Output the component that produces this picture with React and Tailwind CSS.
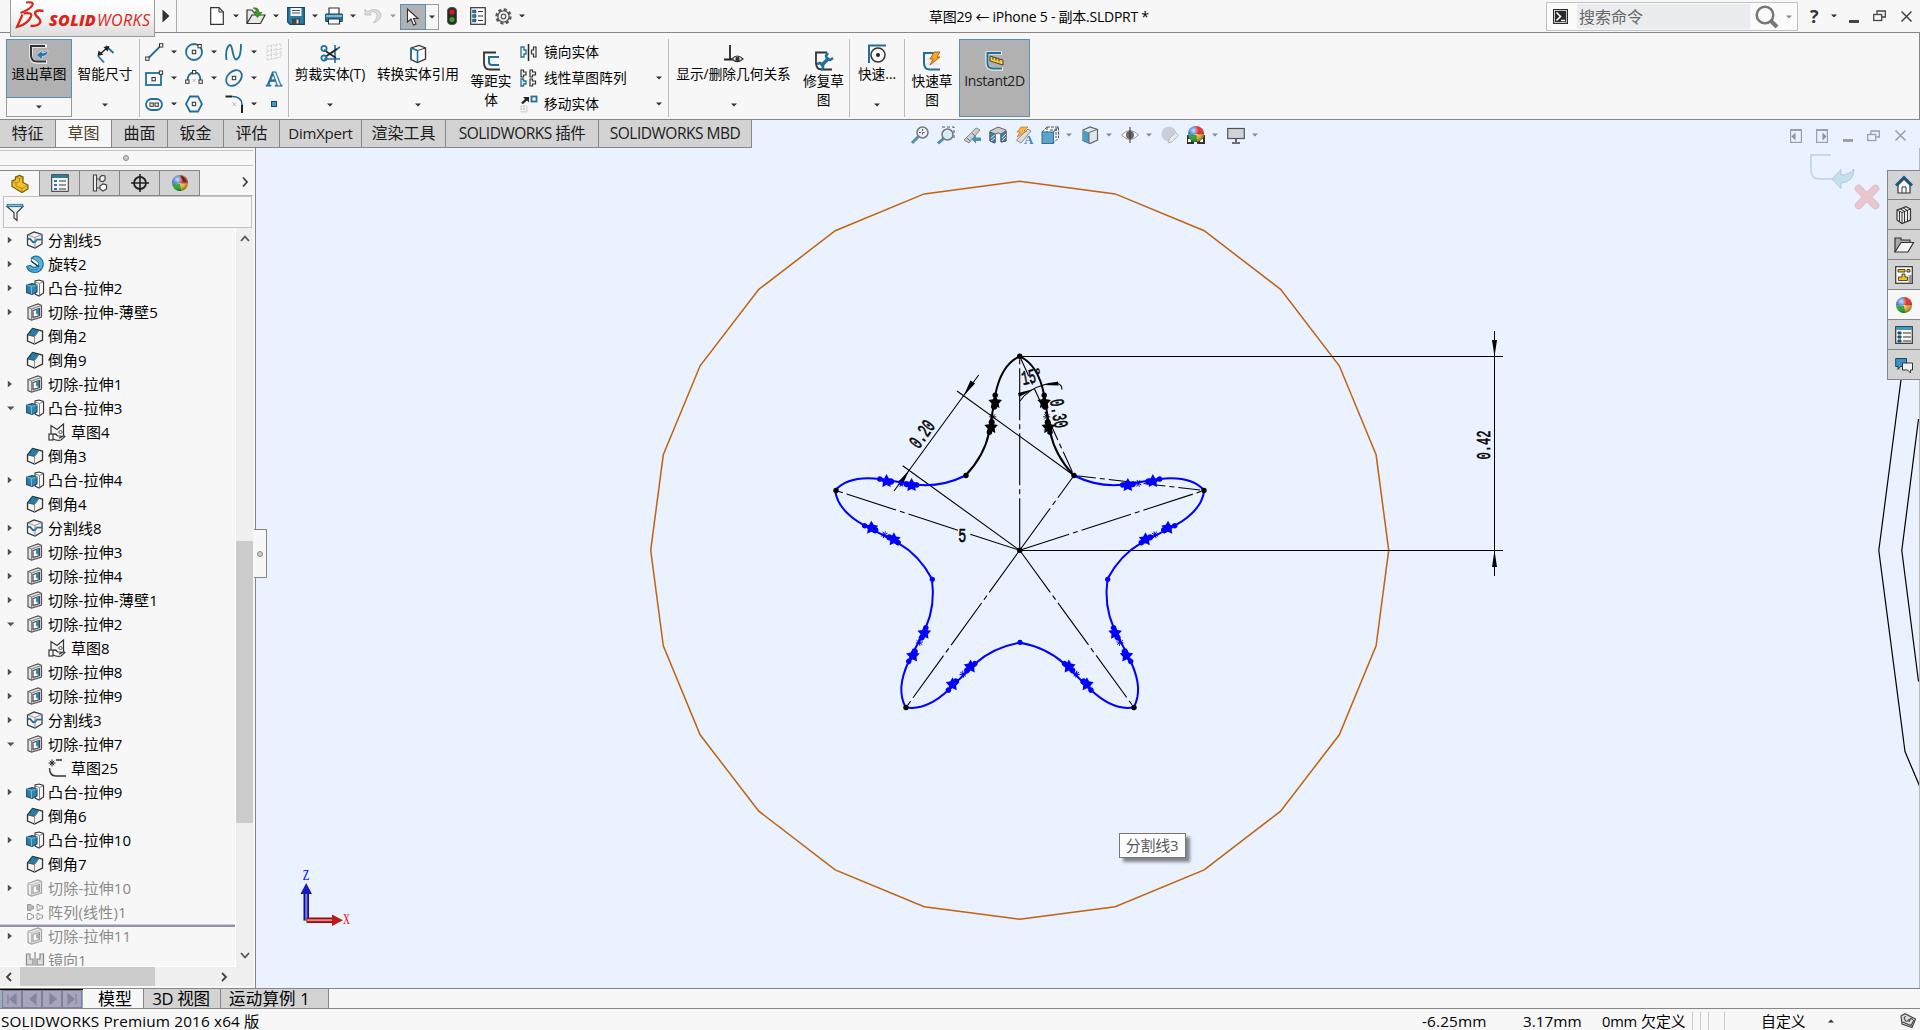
import React from "react";

const B = "#22709a";
const K = "#333333";

/* ---------- small helpers ---------- */
function Svg({ w = 18, h = 18, vb, children, className = "" }) {
  return (
    <svg width={w} height={h} viewBox={vb || `0 0 ${w} ${h}`} fill="none" className={"shrink-0 block overflow-visible " + className}>
      {children}
    </svg>
  );
}

function Caret({ color = "#333", w = 10 }) {
  return (
    <div className="flex shrink-0 items-center justify-center" style={{ width: w }}>
      <Svg w={6} h={4}><path d="M0 .5H6L3 3.6Z" fill={color} /></Svg>
    </div>
  );
}

function Cell({ w, children }) {
  return <div className="flex shrink-0 items-center justify-center" style={{ width: w }}>{children}</div>;
}

const Sep = () => <div className="mt-[6px] h-[78px] w-px shrink-0 bg-[#bdbdbd]" />;

const Globe = ({ id, glass }) => (
  <g>
    <defs>
      <radialGradient id={id} cx="35%" cy="28%" r="75%">
        <stop offset="0" stopColor="#fff" stopOpacity=".8" />
        <stop offset=".45" stopColor="#fff" stopOpacity=".05" />
        <stop offset="1" stopColor="#000" stopOpacity=".45" />
      </radialGradient>
    </defs>
    <path d="M9 9V1A8 8 0 0 0 1 9Q5 11 9 9Z" fill="#2f66d0" />
    <path d="M9 9V1A8 8 0 0 1 17 9Q13 10.500 9 9Z" fill="#e02a1c" />
    <path d="M9 9.500Q5 11 1 9A8 8 0 0 0 10 17Q10 12 9 9.500Z" fill="#22a32c" />
    <path d="M9 9.500Q13 10.500 17 9A8 8 0 0 1 10 17Q10 12 9 9.500Z" fill="#efc02e" />
    {glass && <path d="M10 2Q14 3 15.500 8L12.500 8Q12 5 9.500 3.500Z" fill="#222" />}
    <circle cx="9" cy="9" r="8" fill={`url(#${id})`} />
  </g>
);

/* ---------- feature tree icons ---------- */
const treeIcons = {
  split: (
    <>
      <path d="M1.500 4 8 1 16 3.500V13L9 17 1.500 14Z" fill="#f2f2f2" stroke={K} strokeWidth="1.200" />
      <path d="M1.500 4 9 6.500 16 3.500M9 6.500V17" stroke="#888" strokeWidth=".9" />
      <path d="M1.500 8Q4 7 5.500 9.500T9 11Q10.500 8 12.500 8.500T16 8" stroke={B} strokeWidth="1.800" />
    </>
  ),
  revolve: (
    <>
      <path d="M5.500 3Q9-.500 13.500 2.200 18 5.500 17 11 15 17.500 8.500 17.500 2 17 .700 11.500L4.500 10.500Q7.500 13.500 11 11.500" fill="#5db2dc" stroke={B} strokeWidth="1.200" />
      <path d="M5.500 3Q4.500 5.500 6 6.500L12.500 11.500Q13.500 8 11 6Q9 4.500 5.500 3Z" fill="#f7f7f7" stroke={B} />
      <path d="M5 6 13 12" stroke="#153c52" strokeWidth="1.400" />
      <path d="M2 12.500Q7 17 12.500 13.500" stroke="#2b7ba6" strokeWidth="1" />
    </>
  ),
  boss: (
    <>
      <path d="M9 2 13 1 17.500 2.500V14L13 17 9 15Z" fill="#fff" stroke={K} strokeWidth="1.200" />
      <path d="M13.500 4.500V16.500M13.500 4.500 17.500 2.500M13.500 4.500 9 3" stroke="#777" strokeWidth=".9" />
      <path d="M.700 6 6 4.500 11 6V13L6 15.500.700 13.500Z" fill="#2f83ad" stroke="#17465e" strokeWidth="1.100" />
      <path d="M.700 6 5.500 7.500 11 6M5.500 7.500V15" stroke="#7cc3e3" strokeWidth=".9" />
    </>
  ),
  cut: (
    <>
      <path d="M2 4.500 12 1 15.500 2.500V14L5.500 17 2 15.500Z" fill="#e4e4e4" stroke="#555" strokeWidth="1.200" />
      <path d="M5.500 6V17M5.500 6 15.500 2.500M2 4.500 5.500 6" stroke="#777" strokeWidth=".9" />
      <path d="M7 7.500 13.500 5.500V12.500L7 14.500Z" fill="#fff" stroke="#444" strokeWidth="1.200" />
      <path d="M10 7 13 6V12L10 11Z" fill="#2f83ad" />
    </>
  ),
  chamfer: (
    <>
      <path d="M1.500 8 6.500 1.500 16.500 4V13L8.500 17 1.500 14Z" fill="#f4f4f4" stroke={K} strokeWidth="1.300" />
      <path d="M2 8 6.500 1.500 13 3.500 8.500 9.500Z" fill="#2b7ba6" stroke="#17465e" strokeWidth=".8" />
      <path d="M8.500 9.500V17M8.500 9.500 13 3.500" stroke="#888" strokeWidth=".9" />
    </>
  ),
  sketch: (
    <>
      <path d="M3 11V2.500L9 6.500 15.500 1V14" stroke={K} strokeWidth="1.200" />
      <rect x="1" y="11" width="4" height="6" fill="#fff" stroke={K} strokeWidth="1.200" />
      <path d="M5 11.500Q8 10 9.500 13H13Q14 14.500 11 15M5 16Q9 18 13 17L17 13.500Q16 12 13.500 14" fill="#fff" stroke={K} strokeWidth="1.200" />
      <path d="M10.500 9 12.500 7 14.500 9 12.500 11Z" fill="#fff" stroke={K} />
    </>
  ),
  sketch2: (
    <>
      <path d="M8 1H14M1.500 9Q1.500 17 8 17H18" stroke={K} strokeWidth="1.400" />
      <path d="M4 .500V7.500M.500 4H7.500M1.700 1.700 6.300 6.300M6.300 1.700 1.700 6.300" stroke="#222" strokeWidth="1" />
    </>
  ),
  pattern: (
    <>
      <path d="M1.500 1.500H5V3H7.500V6H5V7.500H1.500Z" fill="#bbb" stroke="#999" />
      <path d="M11 1.500H13V3H16.500V6H13V7.500H11ZM1.500 10.500H5V12H7.500V15H5V16.500H1.500ZM11 10.500H13V12H16.500V15H13V16.500H11Z" fill="#fff" stroke="#999" />
    </>
  ),
  mirror: (
    <>
      <path d="M.500 3H4V8H7V14H.500ZM17.500 3H14V8H11V14H17.500Z" fill="#ddd" stroke="#888" strokeWidth="1.200" />
      <path d="M9 1V18" stroke="#888" strokeWidth="1.200" />
    </>
  ),
};

const tree = [
  ["r", "split", "分割线5"], ["r", "revolve", "旋转2"], ["r", "boss", "凸台-拉伸2"], ["r", "cut", "切除-拉伸-薄壁5"],
  ["", "chamfer", "倒角2"], ["", "chamfer", "倒角9"], ["r", "cut", "切除-拉伸1"], ["d", "boss", "凸台-拉伸3"],
  ["c", "sketch", "草图4"], ["", "chamfer", "倒角3"], ["r", "boss", "凸台-拉伸4"], ["", "chamfer", "倒角4"],
  ["r", "split", "分割线8"], ["r", "cut", "切除-拉伸3"], ["r", "cut", "切除-拉伸4"], ["r", "cut", "切除-拉伸-薄壁1"],
  ["d", "cut", "切除-拉伸2"], ["c", "sketch", "草图8"], ["r", "cut", "切除-拉伸8"], ["r", "cut", "切除-拉伸9"],
  ["r", "split", "分割线3"], ["d", "cut", "切除-拉伸7"], ["c", "sketch2", "草图25"], ["r", "boss", "凸台-拉伸9"],
  ["", "chamfer", "倒角6"], ["r", "boss", "凸台-拉伸10"], ["", "chamfer", "倒角7"], ["r", "cut", "切除-拉伸10", 1],
  ["", "pattern", "阵列(线性)1", 1], ["r", "cut", "切除-拉伸11", 1], ["", "mirror", "镜向1", 1],
];

function TreeRow({ row }) {
  const [kind, icon, label, off] = row;
  return (
    <div className="flex h-[24px] shrink-0 items-center">
      <div className="w-[26px] shrink-0 pl-[7px]">
        {kind === "r" && <Svg w={6} h={8}><path d="M.800.500 5 4 .800 7.500Z" fill="#555" /></Svg>}
        {kind === "d" && <Svg w={8} h={5}><path d="M0 .500H7.500L3.700 4.300Z" fill="#555" /></Svg>}
      </div>
      <div className={"shrink-0 " + (kind === "c" ? "ml-[22px] mr-[5px] " : "mr-[4px] ") + (off && icon === "cut" ? "opacity-50 grayscale" : "")}>
        <Svg>{treeIcons[icon]}</Svg>
      </div>
      <span className={"whitespace-nowrap text-[15px] leading-[22px] " + (label.length > 5 ? "tracking-[0.2px] " : "") + (off ? "text-[#8a8a8a]" : "text-black")}>{label}</span>
    </div>
  );
}

/* ---------- title bar ---------- */
function TitleBar() {
  return (
    <div className="relative flex h-[33px] shrink-0 items-stretch border-b border-[#868686] bg-[#f7f7f7]">
      <div className="absolute left-[10px] top-0 z-10 h-[37px] w-[145px] border border-t-0 border-[#9a9a9a] bg-gradient-to-b from-[#ffffff] via-[#f4f4f4] to-[#dcdcdc]">
        <div className="flex items-end pt-px">
          <Svg w={36} h={28} className="ml-[2px]">
            <path d="M13 1.500Q21 .500 19.500 4Q17 8.500 7.500 12" stroke="#d9261c" strokeWidth="2.200" />
            <path d="M10.500 12.500Q20 11 18 15.500Q14.500 23.500 4 26L9.500 13.500" stroke="#d9261c" strokeWidth="2.200" />
            <path d="M30.500 10Q22.500 8.500 22 12Q22 14 25.500 17Q29 20.500 26 23Q24 25 17.500 25" stroke="#d9261c" strokeWidth="2.400" />
          </Svg>
          <div className="flex whitespace-nowrap italic leading-[18px] text-[#d9261c]">
            <span className="w-[48px] font-['Open_Sans'] text-[16px] font-extrabold tracking-[0.3px]">SOLID</span>
            <span className="font-['Open_Sans'] text-[16px] font-normal tracking-[0.4px]">WORKS</span>
          </div>
        </div>
      </div>
      <div className="flex w-[177px] shrink-0 items-center justify-end border-r border-[#aaa] pr-[6px]">
        <Svg w={8} h={14}><path d="M.500.500 7.500 7 .500 13.500Z" fill="#333" /></Svg>
      </div>
      <div className="w-[26px] shrink-0" />
      <Cell w={28}><Svg w={14} h={18}><path d="M.700.700H9L13.300 5V17.300H.700Z" fill="#fff" stroke={K} strokeWidth="1.200" /><path d="M9 .700V5H13.300" stroke={K} /></Svg></Cell>
      <Caret />
      <Cell w={30}>
        <Svg w={20} h={18}>
          <path d="M1 16.500V3H6L7.500 5H10M1 16.500 6 8H19L14.500 16.500Z" fill="#e8e8e8" stroke={K} strokeWidth="1.200" />
          <path d="M7 1Q13 0 13 5.500H16L11.500 10.500 7.500 5.500H10.500Q10.500 2 7 1Z" fill="#3a9a1c" stroke="#1f6a0c" strokeWidth=".6" />
        </Svg>
      </Cell>
      <Caret />
      <Cell w={29}>
        <Svg>
          <path d="M.700.700H17.300V17.300H3L.700 15Z" fill="#2c7ba5" stroke="#16425a" strokeWidth="1.200" />
          <rect x="3.500" y="1" width="11" height="8" fill="#eef3f6" /><path d="M5 3.500H13M5 6H13" stroke="#556" />
          <rect x="5" y="11.500" width="8" height="6" fill="#444" /><rect x="9.500" y="12.500" width="2" height="4" fill="#ddd" />
        </Svg>
      </Cell>
      <Caret />
      <Cell w={28}>
        <Svg>
          <path d="M4 7V1H14V7" fill="#fff" stroke={K} strokeWidth="1.200" />
          <path d="M.700 7H17.300V14.500H.700Z" fill="#2c7ba5" stroke="#16425a" />
          <path d="M1 9H17" stroke="#8fd0ee" strokeWidth="1.500" />
          <path d="M3.500 12H14.500V17H3.500Z" fill="#fff" stroke={K} strokeWidth="1.100" />
        </Svg>
      </Cell>
      <Caret />
      <Cell w={30}>
        <Svg><path d="M1 2V8H7.500L5.500 6Q9 3 12.500 6.500 14.500 10 9.500 16Q18 12.500 17 7 14-.500 3.500 4.500Z" fill="#ddd" stroke="#bbb" strokeWidth=".8" /></Svg>
      </Cell>
      <Caret color="#999" w={9} />
      <div className="ml-[3px] mt-[4px] flex h-[26px] shrink-0">
        <div className="flex w-[26px] items-center justify-center border border-[#5690b4] bg-[#b1b1b1]">
          <Svg w={14} h={18}><path d="M1.500 1V14L5 11 7.500 17 10 16 7.500 10.500H12Z" fill="#fff" stroke={K} strokeWidth="1.100" /></Svg>
        </div>
        <div className="flex w-[13px] items-center justify-center border border-l-0 border-[#999]"><Caret /></div>
      </div>
      <Cell w={26}>
        <Svg w={10} h={18}><rect x=".5" y=".5" width="9" height="17" rx="3.500" fill="#2a2a2a" stroke="#555" /><circle cx="5" cy="5" r="2.600" fill="#d02018" /><circle cx="5" cy="12.500" r="2.600" fill="#35a02a" /></Svg>
      </Cell>
      <Cell w={26}>
        <Svg w={16} h={18}><rect x=".700" y=".700" width="14.600" height="16.600" fill="#fff" stroke={K} strokeWidth="1.200" /><path d="M2.500 3H6V6H2.500ZM2.500 7.500H6V10.500H2.500ZM2.500 12H6V15H2.500Z" fill="#2c7ba5" stroke="#16425a" strokeWidth=".5" /><path d="M8 4.500H13M8 9H13M8 13.500H13" stroke={K} strokeWidth="1.200" /></Svg>
      </Cell>
      <Cell w={25}>
        <Svg w={17} h={17}>
          <circle cx="8.500" cy="8.500" r="7" stroke="#555" strokeWidth="2.400" strokeDasharray="3.100 2.400" />
          <circle cx="8.500" cy="8.500" r="5.600" fill="#f7f7f7" stroke="#555" strokeWidth="1.300" /><circle cx="8.500" cy="8.500" r="2.300" stroke="#555" strokeWidth="1.200" />
        </Svg>
      </Cell>
      <Caret w={12} />
      <div className="ml-[401px] flex w-[400px] shrink-0 items-center whitespace-nowrap pt-px text-[14px] leading-[20px] tracking-[-0.25px] text-black">草图29 ← iPhone 5 - 副本.SLDPRT *</div>
      <div className="ml-auto mr-[8px] flex items-center">
        <div className="mb-[1px] mt-[2px] flex h-[29px] w-[252px] items-center border border-[#c2c2c2] bg-[#fafafa]">
          <Svg w={15} h={15} className="ml-[6px]"><rect width="15" height="15" fill="#2b2b2b" /><rect x="1.500" y="1.500" width="12" height="12" stroke="#eee" strokeWidth=".8" /><path d="M3.500 3.500 7.500 7.500 3.500 11.500M8 11.500H12" stroke="#fff" strokeWidth="1.600" /></Svg>
          <div className="ml-[9px] flex h-[25px] w-[174px] items-center bg-[#ebecf0] pl-[2px] text-[16px] leading-[22px] text-[#666]">搜索命令</div>
          <Svg w={25} h={24} className="ml-[5px]"><circle cx="10" cy="10" r="8.300" stroke="#777" strokeWidth="2.500" /><path d="M16 16 22 22" stroke="#777" strokeWidth="4" /></Svg>
          <Caret color="#888" w={17} />
        </div>
        <span className="ml-[12px] w-[10px] text-[18px] font-bold leading-none text-[#333]">?</span>
        <div className="w-[8px]" /><Caret w={12} />
        <Svg w={10} h={3} className="ml-[9px] mt-[10px]"><rect width="10" height="3" fill="#444" /></Svg>
        <Svg w={13} h={12} className="ml-[14px]"><path d="M4 4V1H12.300V7H9" stroke="#444" strokeWidth="1.300" /><rect x=".7" y="4.500" width="8" height="6" stroke="#444" strokeWidth="1.300" /></Svg>
        <Svg w={11} h={11} className="ml-[15px]"><path d="M.500.500 10.500 10.500M10.500.500.500 10.500" stroke="#444" strokeWidth="1.500" /></Svg>
      </div>
    </div>
  );
}

/* ---------- ribbon ---------- */
const toolRows = [
  [
    <><path d="M3 15.500 15.500 3" stroke={B} strokeWidth="1.800" /><rect x=".7" y="14" width="3.300" height="3.300" fill="#fff" stroke={K} /><rect x="14.500" y=".7" width="3.300" height="3.300" fill="#fff" stroke={K} /></>,
    <><circle cx="9" cy="9" r="8" stroke={B} strokeWidth="1.800" /><rect x="7.300" y="7.300" width="3.400" height="3.400" stroke={K} /><rect x="13" y="1.500" width="3.300" height="3.300" fill="#fff" stroke={K} /></>,
    <path d="M1.500 17Q0 6 4 2.500C8-1 7 16 11 16.500C15 16 16 8 16 1" stroke={B} strokeWidth="1.800" />,
    <path d="M2 3 16 1V14L2 17ZM6.500 2.500V16M11 2V15M2 8 16 6M2 12.500 16 10" stroke="#ccc" strokeDasharray="2 1" />,
  ],
  [
    <><rect x="1" y="4" width="15" height="12" stroke={B} strokeWidth="1.800" /><rect x="7" y="8.500" width="3.300" height="3.300" stroke={K} /><rect x="14.300" y="2" width="3.300" height="3.300" fill="#fff" stroke={K} /></>,
    <><path d="M2.500 12Q2.500 4 9 3.500T15.500 12" stroke={B} strokeWidth="1.800" /><rect x="7.500" y="1.500" width="3.300" height="3.300" fill="#fff" stroke={K} /><rect x=".7" y="11" width="3.300" height="3.300" fill="#fff" stroke={K} /><rect x="14" y="11" width="3.300" height="3.300" fill="#fff" stroke={K} /><path d="M7.500 10 10.500 13M10.500 10 7.500 13" stroke="#bbb" /></>,
    <><ellipse cx="9" cy="9" rx="9" ry="6.500" transform="rotate(-45 9 9)" stroke={B} strokeWidth="1.800" /><rect x="7.300" y="7.300" width="3.400" height="3.400" stroke={K} /></>,
    <text x="9" y="16.500" textAnchor="middle" fontFamily="Liberation Serif, serif" fontWeight="bold" fontSize="22" fill="#fff" stroke={B} strokeWidth="1.100">A</text>,
  ],
  [
    <><rect x="1" y="4" width="16" height="11" rx="5.500" stroke={B} strokeWidth="1.800" /><rect x="5" y="8" width="3.300" height="3.300" stroke={K} /><rect x="10" y="8" width="3.300" height="3.300" stroke={K} /></>,
    <><path d="M5 1.500H13L17 9 13 16.500H5L1 9Z" stroke={B} strokeWidth="1.800" /><rect x="7.300" y="7.300" width="3.400" height="3.400" stroke={K} /></>,
    <><path d="M.500 1.500H7M17 10V18" stroke="#222" strokeWidth="2" /><path d="M7 1.500Q17 1.500 17 10" stroke={B} strokeWidth="1.600" /><path d="M7.500 7.500 11 11M11 7.500 7.500 11" stroke="#bbb" /></>,
    <rect x="6.500" y="6.500" width="5" height="5" fill="#3b9acb" stroke="#17465e" />,
  ],
];

function BigTool({ w, icon, lines, arrow, low }) {
  return (
    <div className="flex shrink-0 flex-col items-center" style={{ width: w }}>
      <div className={low ? "mt-[18px]" : "mt-[11px]"}><Svg w={20} h={20}>{icon}</Svg></div>
      <div className="whitespace-nowrap text-center text-[13.700px] leading-[19px]">{lines.map((l) => <div key={l}>{l}</div>)}</div>
      {arrow && <div className="mt-[20px]"><Caret /></div>}
    </div>
  );
}

function Ribbon() {
  return (
    <div className="flex h-[87px] shrink-0 items-start border-b border-r border-b-[#868686] border-r-[#868686] bg-[#f7f7f7] text-black">
      <div className="ml-[6px] mt-[6px] w-[66px] shrink-0">
        <div className="flex h-[59px] flex-col items-center border border-[#5690b4] bg-[#b1b1b1] pt-[4px]">
          <Svg w={20} h={20}><path d="M18 2H2V12Q2 18 8 18H18" stroke="#f2f2f2" strokeWidth="3.500" /><path d="M16 2H2V11Q2 17.500 8 17.500H17" stroke={K} strokeWidth="2" /><path d="M19 6Q19 12 13 12.500V16L7.500 11 13 6.500V9Q17 9 19 6Z" fill="#2478a6" stroke="#e8f4fa" strokeWidth=".6" /></Svg>
          <span className="whitespace-nowrap text-[13.700px] leading-[19px]">退出草图</span>
        </div>
        <div className="flex h-[19px] items-center justify-center border border-t-0 border-[#999]"><Caret /></div>
      </div>
      <BigTool w={66} arrow lines={["智能尺寸"]} icon={<><path d="M3 12 9 18.500M11 2 18.500 9" stroke={B} strokeWidth="1.800" /><path d="M4 11 13 3" stroke="#222" strokeWidth="1.500" /><path d="M2.500 12 3.500 6.500 8.500 10.500ZM14.500 2 8.500 3 12.500 7.500Z" fill="#222" /></>} />
      <div className="w-px shrink-0" />
      <Sep />
      <div className="mt-[6px] flex w-[148px] shrink-0 flex-col">
        {toolRows.map((r, i) => (
          <div key={i} className="flex h-[26px] items-center pl-[4px]">
            {r.map((ic, j) => (
              <React.Fragment key={j}>
                <Svg className="mx-px">{ic}</Svg>
                {j < 3 && (i === 2 && j === 1 ? <div className="w-[20px]" /> : <Caret w={20} />)}
              </React.Fragment>
            ))}
          </div>
        ))}
      </div>
      <Sep />
      <BigTool w={82} arrow lines={["剪裁实体(T)"]} icon={<><path d="M15 1V19M4 15H20M11 9 20 3" stroke={B} strokeWidth="1.600" /><path d="M4 6 16 14M5 13 17 5" stroke="#222" strokeWidth="1.600" /><circle cx="4" cy="4.500" r="2.600" stroke={B} strokeWidth="1.800" /><circle cx="4" cy="14" r="2.600" stroke={B} strokeWidth="1.800" /></>} />
      <BigTool w={94} arrow lines={["转换实体引用"]} icon={<><path d="M3 4 11 1.500 17.500 4V15L9.500 18.500 3 15.500Z" fill="#fff" stroke={K} strokeWidth="1.300" /><path d="M3 4 9.500 6.500 17.500 4" stroke={K} /><path d="M9.500 6.500V18M3 4V15.500M3 4 9.500 6.500" stroke={B} strokeWidth="1.600" /></>} />
      <BigTool w={52} low lines={["等距实", "体"]} icon={<><path d="M15 1.500H3V12Q3 18.500 9 18.500H19" stroke={K} strokeWidth="1.800" /><path d="M18 6H8V11Q8 14 11 14H18" stroke={B} strokeWidth="2" /></>} />
      <div className="ml-[2px] mt-[6px] flex w-[149px] shrink-0 flex-col text-[13.700px]">
        {[
          ["镜向实体", <><path d="M1 4V14H4V11H6V7H4V4Z" stroke={B} strokeWidth="1.300" /><path d="M8.500 1V18" stroke="#222" strokeWidth="1.500" /><path d="M16 4V14H13.500V11H11.500V7H13.500V4Z" stroke={K} strokeWidth="1.200" /></>],
          ["线性草图阵列", <><path d="M1 10V17H3.500V15H6V12H3.500V10Z" stroke={B} strokeWidth="1.300" /><path d="M1 1V8H3.500V6H6V3H3.500V1ZM10 1V8H12.500V6H15.500V3H12.500V1ZM10 10V17H12.500V15H15.500V12H12.500V10Z" stroke={K} strokeWidth="1.200" /></>],
          ["移动实体", <><path d="M1 8 5 4 3 2H9V7.500L7 5.500 3 9Z" fill="#222" /><rect x="11.500" y="1.500" width="5" height="5" stroke={B} strokeWidth="1.800" /><path d="M1 11H7V17H1ZM4 11V17M1 14H7" stroke="#bbb" strokeDasharray="1.500 1" /></>],
        ].map(([t, ic], i) => (
          <div key={t} className="flex h-[26px] items-center">
            <Svg className="ml-[1px]">{ic}</Svg>
            <span className="ml-[6px] grow leading-[20px] tracking-[0.1px]">{t}</span>
            {i > 0 && <Caret w={18} />}
          </div>
        ))}
      </div>
      <Sep />
      <BigTool w={129} arrow lines={["显示/删除几何关系"]} icon={<><path d="M6 1V15M0 15.500H12" stroke="#222" strokeWidth="1.800" /><path d="M8 15Q13 9 19 15 13 20 8 15Z" fill="#fff" stroke="#333" strokeWidth="1.200" /><circle cx="13.500" cy="15" r="2.200" fill="#333" /></>} />
      <BigTool w={51} low lines={["修复草", "图"]} icon={<><path d="M13 1.500H2V12Q2 18.500 8 18.500H18" stroke={K} strokeWidth="1.800" /><path d="M7 15 15 7" stroke={B} strokeWidth="3.500" /><path d="M14 2 12 5 13 8 16 9 19 7M3 13 6 12 9 14V17L7 19" stroke={B} strokeWidth="2.500" /></>} />
      <Sep />
      <BigTool w={54} arrow lines={["快速..."]} icon={<><path d="M1 1.500H19M2 2V19" stroke={B} strokeWidth="2" /><circle cx="11" cy="11" r="7" stroke={K} strokeWidth="1.500" /><circle cx="11" cy="11" r="2" fill="#222" /></>} />
      <Sep />
      <BigTool w={54} low lines={["快速草", "图"]} icon={<><path d="M7 6V18M12 6V18M3 8H19M3 13H19" stroke="#ddd" strokeWidth=".8" /><path d="M13 2H2V12Q2 18.500 8 18.500H18" stroke={B} strokeWidth="2" /><path d="M12 1H18L15 6H18L8 14 11 8H8Z" fill="#f5a81c" stroke="#a04a10" strokeWidth=".8" /></>} />
      <div className="mt-[6px] flex h-[78px] w-[71px] shrink-0 flex-col items-center border border-[#5690b4] bg-[#b1b1b1] pt-[11px]">
        <Svg w={20} h={20}><path d="M17 2H2V12Q2 18 8 18H18" stroke="#e8e8e8" strokeWidth="3.500" /><path d="M16 2H2.500V12Q2.500 17.500 8 17.500H17" stroke={B} strokeWidth="2" /><path d="M5 5 18 9V14L5 10Z" fill="#f4cf3a" stroke="#333" strokeWidth=".9" /><path d="M8 6V8.500M11 7V9.500M14 8V10.500" stroke="#333" /></Svg>
        <span className="text-[14px] leading-[20px] tracking-[-0.35px] text-[#222]">Instant2D</span>
      </div>
    </div>
  );
}

/* ---------- command tabs + heads-up toolbar ---------- */
const HudCaret = () => <div className="-ml-[3px] flex w-[9px] justify-center"><Caret color="#888" w={9} /></div>;

function TabRow() {
  const tabs = [["特征", 56], ["草图", 56], ["曲面", 56], ["钣金", 56], ["评估", 56], ["DimXpert", 82], ["渲染工具", 84], ["SOLIDWORKS 插件", 153], ["SOLIDWORKS MBD", 153]];
  const stem = "#777";
  return (
    <div className="flex h-[28px] shrink-0">
      <div className="flex w-[752px] shrink-0 border-b border-[#868686]">
        {tabs.map(([t, w], i) => (
          <div key={t} style={{ width: w }} className={"flex shrink-0 items-center justify-center whitespace-nowrap border-r border-[#868686] pb-px leading-[22px] " + (i === 1 ? "bg-[#f7f7f7] text-[16px] text-[#4a4030]" : "bg-[#d3d3d3] text-[#1c1c1c] " + (i === 5 ? "text-[15px] tracking-[-0.25px]" : i > 6 ? "text-[15.500px] tracking-[-0.5px]" : "text-[16px]"))}>{t}</div>
        ))}
      </div>
      <div className="ml-[159px] flex items-center gap-[8px] pt-[2px]">
        <Svg><circle cx="11.500" cy="6.500" r="5.500" fill="#e8eef4" stroke={stem} strokeWidth="1.500" /><path d="M11.500 3V10M8 6.500H15" stroke="#555" strokeDasharray="2 1.500" /><path d="M7.500 10.500 1 17" stroke="#4d8fb5" strokeWidth="3" /></Svg>
        <Svg><path d="M5 1H17V14" stroke="#555" strokeDasharray="3 2" /><circle cx="10.500" cy="8.500" r="5.500" fill="#d9ecf6" stroke={stem} strokeWidth="1.500" /><path d="M6.500 12.500 1 17.500" stroke="#4d8fb5" strokeWidth="3" /></Svg>
        <Svg><path d="M1 14 13 2 17 4 6 17Z" fill="#ccc" stroke="#888" /><path d="M4 12 7 15M9 7 12 10" stroke="#777" /><path d="M18 11.500V15H13V17.500L8.500 13.200 13 9V11.500Z" fill="#4d8fb5" /></Svg>
        <Svg><path d="M1 5 9 1 17 4V15L12 16V8Q9 6 6 8V17L1 15Z" fill="#c8cdd0" stroke="#666" /><path d="M1 6 6 8V17L1 15ZM12 8 17 5V15L12 16Z" fill="#3d88b0" stroke="#555" /><path d="M2 12 6 9M2 15 6 12M13 12 17 8M13 15 17 11" stroke="#cfe6f2" /></Svg>
        <Svg><path d="M1.500 14 13 3 16 5 6 17Z" fill="#ddd" stroke="#888" /><path d="M6 1H13L9 5H12L2 11 5 6H2Z" fill="#f5b54a" stroke="#c07a20" strokeWidth=".7" /><text x="9" y="17.500" fontSize="13" fontFamily="Liberation Serif, serif" fontWeight="bold" fill="#3d88b0">A</text></Svg>
        <Svg><path d="M6 1H17.500V12L13 16.500M6 1 1 6M17.500 1 12.500 6M6 1V6M9 4H17M15 2V12" stroke="#555" strokeDasharray="3 1" /><rect x="1" y="6" width="11.500" height="11.500" fill="#5ea4c9" stroke="#376d8a" /></Svg>
        <HudCaret />
        <Svg><path d="M2 4 9 1 16.500 3.500V14L9 17.500 2 14.500Z" fill="#dfe7ec" stroke="#666" strokeWidth="1.200" /><path d="M2 4 8 6.500V17L2 14.500Z" fill="#4c9cc6" /><path d="M8 6.500 16 3.500M8 6.500V17" stroke="#666" /></Svg>
        <HudCaret />
        <Svg><path d="M.500 9Q9 0 17.500 9 9 18 .500 9Z" fill="#f4f4f4" stroke="#999" /><circle cx="9" cy="9" r="4" fill="#666" /><path d="M9 1V17" stroke="#333" /></Svg>
        <HudCaret />
        <Svg><circle cx="8" cy="8" r="7.500" fill="#c9cfd9" /><path d="M7 17 8.500 12.500 14.500 6.500 17.500 9.500 11.500 15.500Z" fill="#e5e8ee" stroke="#b5bac4" /></Svg>
        <Svg><path d="M0 9H18V18H0Z" fill="#333" /><path d="M1 13H4V16H1ZM7 15H10V18H7ZM13 13H16V16H13Z" fill="#fff" /><g transform="translate(0 -1)"><Globe id="gh" /></g></Svg>
        <HudCaret />
        <Svg><rect x=".700" y="2.500" width="16.600" height="10" fill="#d0d4d8" stroke="#555" strokeWidth="1.200" /><path d="M9 13V16M5 17H13" stroke="#444" strokeWidth="1.600" /></Svg>
        <HudCaret />
      </div>
      <div className="ml-auto mr-[14px] flex items-center pt-[3px]">
        <Svg w={12} h={14}><rect x=".6" y=".6" width="10.800" height="12.800" stroke="#9a9fa8" strokeWidth="1.200" /><path d="M.500 1H11.500" stroke="#9a9fa8" strokeWidth="2" /><path d="M5.500 3.500V11.500L1.500 7.500Z" fill="#8a8f98" /></Svg>
        <Svg w={12} h={14} className="ml-[14px]"><rect x=".6" y=".6" width="10.800" height="12.800" stroke="#9a9fa8" strokeWidth="1.200" /><path d="M.500 1H11.500" stroke="#9a9fa8" strokeWidth="2" /><path d="M6.500 3.500V11.500L10.500 7.500Z" fill="#8a8f98" /></Svg>
        <Svg w={10} h={3} className="ml-[15px] mt-[9px]"><rect width="10" height="3" fill="#9a9fa8" /></Svg>
        <Svg w={13} h={12} className="ml-[14px]"><path d="M4 4V1H12.300V7H9" stroke="#9a9fa8" strokeWidth="1.300" /><rect x=".7" y="4.500" width="8" height="6" stroke="#9a9fa8" strokeWidth="1.300" /></Svg>
        <Svg w={11} h={11} className="ml-[15px]"><path d="M.500.500 10.500 10.500M10.500.500.500 10.500" stroke="#9a9fa8" strokeWidth="1.500" /></Svg>
      </div>
    </div>
  );
}

/* ---------- feature manager ---------- */
function FeaturePanel() {
  const tabIcons = [
    <><path d="M1 10V6L4.500 4.500V2L8.500.500 12 2V7.500L17 10V14L11 17.500 1 11.500Z" fill="#f2c12e" stroke="#7a5a08" strokeWidth="1.200" /><path d="M1 6 5 8 8.500 6.500V3.500M4.500 2 8.500 3.500 12 2M5 8V11L11 13.500 17 10M11 13.500V17" stroke="#a37c12" strokeWidth=".8" /></>,
    <><rect x=".7" y=".7" width="16.600" height="16.600" fill="#f6f6f6" stroke={K} /><path d="M1 2.500H17" stroke="#2c7ba5" strokeWidth="3" /><path d="M3 7H6M3 11H6M3 15H6" stroke="#2c7ba5" strokeWidth="2.200" /><path d="M8 7H15M8 11H15M8 15H15" stroke={K} strokeWidth="1.200" /></>,
    <><path d="M2.500 1H5.500V17H2.500ZM5.500 5H9M5.500 14H9" fill="#fff" stroke="#444" strokeWidth="1.200" /><path d="M9 3 11 1.500 14 2V6L12 7.500 9 7ZM9 12 12 10 15.500 11V15L12 17 9 15Z" fill="#fff" stroke="#444" strokeWidth="1.200" /></>,
    <><circle cx="9" cy="9" r="6" stroke="#222" strokeWidth="1.800" /><path d="M9 0V18M0 9H18" stroke="#222" strokeWidth="1.600" /></>,
    <Globe key="g" id="gp" glass />,
  ];
  return (
    <div className="flex h-[840px] w-[256px] shrink-0 flex-col border-r border-[#868686] bg-[#f7f7f7]">
      <div className="mt-[2px] flex h-[16px] w-[253px] shrink-0 items-center justify-center border-y border-[#c4c4c4] pr-[2px]">
        <div className="h-[6px] w-[6px] rounded-full border border-[#8a8a8a] bg-[#ccc]" />
      </div>
      <div className="mt-[4px] flex h-[26px] w-[253px] shrink-0">
        {tabIcons.map((ic, i) => (
          <div key={i} className={"flex h-[26px] w-[40px] items-center justify-center border-r border-t border-[#868686] " + (i ? "border-b bg-[#d3d3d3]" : "bg-[#f7f7f7]")}><Svg>{ic}</Svg></div>
        ))}
        <div className="flex grow items-center justify-end border-b border-[#bbb] pb-[2px] pr-[5px]"><Svg w={6} h={10}><path d="M1 .500 5 5 1 9.500" stroke="#444" strokeWidth="1.800" /></Svg></div>
      </div>
      <div className="ml-[3px] flex h-[32px] w-[249px] shrink-0 items-center border border-[#c2c2c2] pl-[2px]">
        <Svg><path d="M1 3.500H17L11 9.500V17.500L8 15V9.500Z" fill="#eee" stroke={K} strokeWidth="1.100" /><path d="M.700 2.500H17.300" stroke="#2c7ba5" strokeWidth="3.200" /><path d="M2 2.300H16" stroke="#8fd0ee" /></Svg>
      </div>
      <div className="flex h-[739px] shrink-0">
        <div className="relative h-[739px] w-[236px] shrink-0 overflow-hidden border-b border-r border-white">
          {tree.map((r) => <TreeRow key={r[2]} row={r} />)}
          <div className="absolute left-0 top-[696px] h-[3px] w-[235px] border-t border-[#c9c9e0] bg-[#9191ae]" />
        </div>
        <div className="flex h-[739px] w-[17px] flex-col items-center bg-[#efefef]">
          <Svg w={10} h={7} className="ml-px mt-[7px]"><path d="M1 6 5 1.500 9 6" stroke="#555" strokeWidth="1.800" /></Svg>
          <div className="mt-[299px] h-[282px] w-[17px] bg-[#cbcbcb]" />
          <Svg w={10} h={7} className="ml-px mt-[129px]"><path d="M1 1 5 5.500 9 1" stroke="#555" strokeWidth="1.800" /></Svg>
        </div>
      </div>
      <div className="flex h-[19px] w-[253px] shrink-0 items-center bg-[#efefef]">
        <Svg w={6} h={10} className="ml-[6px]"><path d="M5 1 1 5 5 9" stroke="#444" strokeWidth="1.800" /></Svg>
        <div className="ml-[8px] h-[19px] w-[135px] bg-[#cbcbcb]" />
        <Svg w={6} h={10} className="ml-[66px]"><path d="M1 1 5 5 1 9" stroke="#444" strokeWidth="1.800" /></Svg>
      </div>
    </div>
  );
}

/* ---------- graphics area ---------- */
const CX = 1019.7, CY = 550.3;

const starPts = Array.from({ length: 10 }, (_, i) => {
  const r = i % 2 ? 3.800 : 7.200, a = (-90 + i * 36) * Math.PI / 180;
  return `${(r * Math.cos(a)).toFixed(1)},${(r * Math.sin(a)).toFixed(1)}`;
}).join(" ");

function HalfArm({ color, angle, flip }) {
  const marks = (x, y) => <g transform={`translate(${x} ${y})`}><polygon points={starPts} fill={color} /></g>;
  return (
    <g transform={`rotate(${angle}) scale(${flip ? -1 : 1} 1)`} fill={color} stroke="none">
      <path d="M0-194C12-188.500 20.500-176 24.500-155L30.500-118C33.500-104 40.500-89 54-75" fill="none" stroke={color} strokeWidth="2" />
      {marks(24.500, -148)}
      {marks(28.600, -123)}
      <circle cx="24.500" cy="-155" r="2.700" /><circle cx="30.300" cy="-118" r="2.700" />
      <circle cx="25.500" cy="-143.500" r="3" /><circle cx="28" cy="-128" r="3" />
      <path d="M23.500-133.500H30.500M27-137V-130M24.500-136 29.500-131M29.500-136 24.500-131" stroke={color} strokeWidth=".9" />
    </g>
  );
}

function Dim({ x, y, r, len, children }) {
  return (
    <g transform={`translate(${x} ${y}) rotate(${r})`}>
      <text x={-len / 2} y="6.500" textLength={len} lengthAdjust="spacingAndGlyphs" fontFamily="Liberation Mono, monospace" fontSize="20" fill="#000" stroke="#000" strokeWidth=".6">{children}</text>
    </g>
  );
}

function Canvas() {
  const ring = Array.from({ length: 24 }, (_, i) => {
    const a = i * 15 * Math.PI / 180;
    return `${(CX + 369 * Math.cos(a)).toFixed(1)},${(CY + 369 * Math.sin(a)).toFixed(1)}`;
  }).join(" ");
  const tips = [[CX, 356.300], [1204, 490.500], [1134, 707.500], [906, 707.500], [836, 490.500]];
  return (
    <svg width="1663" height="840" viewBox="256 148 1663 840" fill="none" className="block">
      <polygon points={ring} stroke="#c06210" strokeWidth="1.500" />
      <g stroke="#000" strokeWidth="1.200">
        <path d="M1920 313.500 1905 349 1878.800 550.500 1905 751.600 1920 787M1918.500 419 1901.800 550.500 1918.500 681.500" />
      </g>
      <g stroke="#000" strokeWidth="1.100">
        {tips.map(([x, y], i) => <path key={i} d={`M${CX} ${CY}L${x} ${y}`} strokeDasharray="52 4 5 4" />)}
        <path d="M1019.700 550.300 1074 475.500" strokeDasharray="52 4 5 4" />
        <path d="M1074 475.500 1204 490.500M1019.700 356.300 1074 475.500" strokeDasharray="22 4 5 4" />
        <path d="M978.700 375 894 491M957 391 1074 475.500M902.700 465.700 1019.700 550.300" />
        <path d="M1020 401Q1028 389 1045 384.500T1062 389.500" />
      </g>
      <path d="M1020 356.500H1503M1020 550.500H1503M1494.500 331V576" stroke="#000" />
      <g fill="#000">
        <path d="M1494.500 356.500 1492 340H1497ZM1494.500 550.500 1492 567H1497Z" />
        <path d="M963.500 396 970.500 380.500 975 383.500ZM909 470.500 902 486 897.500 482.500Z" />
        <path d="M1034 389 1019 397 1018 393ZM1043 385 1058 381.500 1058.500 385.500Z" />
      </g>
      <g transform={`translate(${CX} ${CY})`}>
        {[72, 144, 216, 288].map((a) => (
          <React.Fragment key={a}><HalfArm color="#0000ff" angle={a} /><HalfArm color="#0000ff" angle={a} flip /></React.Fragment>
        ))}
        <HalfArm color="#000" angle={0} /><HalfArm color="#000" angle={0} flip />
      </g>
      {[...tips, [1074, 475.500], [966, 475.500], [CX, CY]].map(([x, y], i) => <circle key={i} cx={x} cy={y} r="2.700" fill="#000" />)}
      {[[1107.700, 579.300], [932.300, 579.300], [1020, 642.300]].map(([x, y], i) => <circle key={i} cx={x} cy={y} r="2.600" fill="#00f" />)}
      <Dim x={1483} y={445} r={-90} len={29}>0.42</Dim>
      <Dim x={922} y={434} r={-54} len={29}>0.20</Dim>
      <Dim x={1059} y={413.500} r={80} len={29}>0.30</Dim>
      <Dim x={1032} y={376.500} r={-12} len={21}>15°</Dim>
      <rect x="958" y="529" width="9" height="13" fill="#eaf1ff" />
      <Dim x={962.300} y={535.700} r={0} len={8}>5</Dim>
      {/* orientation triad */}
      <circle cx="305.500" cy="920.500" r="5" fill="#dcf5dc" />
      <rect x="303.500" y="892" width="5.500" height="28.500" fill="#10108c" /><rect x="305.300" y="893" width="2" height="27" fill="#8080ee" />
      <path d="M306.200 883 312 894H300.500Z" fill="#1818c0" />
      <rect x="306.500" y="917.500" width="27" height="5.500" fill="#8c1010" /><rect x="307" y="919.200" width="26" height="2" fill="#ee8080" />
      <path d="M343 920.300 332 926V914.500Z" fill="#c01818" />
      <text x="302.800" y="879.500" textLength="6.500" lengthAdjust="spacingAndGlyphs" fontFamily="Liberation Serif, serif" fontSize="14.500" fill="#00f">Z</text>
      <text x="343" y="924" textLength="7" lengthAdjust="spacingAndGlyphs" fontFamily="Liberation Serif, serif" fontSize="14" fill="#f00">X</text>
      {/* confirmation corner */}
      <path d="M1831 155H1811V170Q1811 179 1820 179H1832" stroke="#c3daea" strokeWidth="2" />
      <path d="M1854 169Q1854 182 1841 183V188.500L1832 179 1841 169.500V175Q1849 175 1854 169Z" fill="#c5dfec" stroke="#b0cbd9" />
      <path d="M1858.500 188.500 1875.500 205.500M1875.500 188.500 1858.500 205.500" stroke="#dcbfc8" strokeWidth="7.500" strokeLinecap="round" />
      <path d="M1858.500 188.500 1875.500 205.500M1875.500 188.500 1858.500 205.500" stroke="#e9c7cc" strokeWidth="5.500" strokeLinecap="round" />
    </svg>
  );
}

function TaskPane() {
  const icons = [
    <><path d="M3 9V17H15V9L9 3Z" fill="#fff" stroke={K} strokeWidth="1.200" /><path d="M1 9.500 9 1.500 17 9.500" stroke="#17587c" strokeWidth="2.800" /><path d="M7 17V11H11V17" stroke={K} /></>,
    <><path d="M2 4 11 .700 15.500 3V14L7 17.500 2 14Z" fill="#eee" stroke={K} strokeWidth="1.200" /><path d="M2 4 7 6.500 15.500 3M5 2.800 9.500 5.300M8 1.800 12.500 4.500M7 6.500V17M9.500 5.500V16.500M12.500 4.500V15.500M4.500 5.500V16" stroke={K} /></>,
    <><path d="M0 16V2H6V4H15V6.500" fill="#aaa" stroke={K} strokeWidth="1.200" /><path d="M0 16 6 6.500H18.500L13 16Z" fill="#f4f4f4" stroke={K} strokeWidth="1.200" /></>,
    <><rect x=".7" y=".7" width="16.600" height="16.600" fill="#fff" stroke={K} strokeWidth="1.200" /><path d="M3 3.500H10V6H3ZM12 3.500H15V6H12ZM7 8H10V11H12.500V14.500H3.500V11H7Z" fill="#f2c21e" stroke="#222" strokeWidth=".8" /><path d="M13.500 9H17V17H13.500Z" fill="#999" /></>,
    <g key="g"><Globe id="gt" /></g>,
    <><rect x=".7" y=".7" width="16.600" height="16.600" fill="#f6f6f6" stroke={K} strokeWidth="1.200" /><path d="M1 2.500H17" stroke="#3a9ac8" strokeWidth="3" /><path d="M3 6H6V8H3ZM3 10H6V12H3ZM3 14H6V16H3Z" fill="#2c7ba5" stroke="#16425a" /><path d="M8 7H16M8 11H16M8 15H16" stroke={K} strokeWidth="1.200" /></>,
    <><path d="M.700 2.500H11.500V10.500H5.500L3 13.500V10.500H.700Z" fill="#3a93c0" stroke="#17465e" /><path d="M7.500 7H17.500V14H15.500V17L12.500 14H7.500Z" fill="#f0f0f0" stroke={K} /></>,
  ];
  return (
    <div className="absolute right-0 top-[22px] w-[33px] border-l border-t border-[#868686]">
      {icons.map((ic, i) => (
        <div key={i} className={"flex items-center justify-center border-b border-[#868686] " + (i === 0 ? "h-[29px] " : "h-[30px] ") + (i === 4 ? "bg-[#f7f7f7]" : "bg-[#d3d3d3]")}><Svg>{ic}</Svg></div>
      ))}
    </div>
  );
}

function Bottom() {
  const nav = ["M4 4V14M12 4V14L6 9Z", "M12 4V14L6 9Z", "M6 4V14L12 9Z", "M12 4V14M4 4V14L10 9Z"];
  return (
    <>
      <div className="flex h-[21px] shrink-0 border-y border-[#868686] bg-[#f7f7f7] text-black">
        <div className="flex w-[83px] shrink-0 border-t border-black bg-[#9ab0b8] pl-[2px]">
          {nav.map((d, i) => (
            <div key={i} className="flex h-[18px] w-[20px] items-center justify-center border border-[#7e7e98] bg-[#a5a5bd]"><Svg w={16} h={18}><path d={d} fill="#8484a0" stroke="#8484a0" strokeWidth="1.300" /></Svg></div>
          ))}
        </div>
        <div className="flex w-[60px] items-center justify-center pl-[4px] text-[17px] leading-[19px]">模型</div>
        <div className="flex w-[78px] items-center justify-center border-x border-[#868686] bg-[#d3d3d3] pr-[2px] text-[16.500px] leading-[19px] tracking-[-0.3px]">3D 视图</div>
        <div className="flex w-[108px] items-center border-r border-[#868686] bg-[#d3d3d3] pl-[8px] text-[16.500px] leading-[19px] tracking-[0.2px]">运动算例 1</div>
      </div>
      <div className="flex h-[21px] shrink-0 items-center bg-[#f7f7f7] pt-[3px] text-[15.300px] leading-[18px] text-black">
        <span className="w-[1422px] shrink-0 whitespace-nowrap pl-[1px] tracking-[0.15px]">SOLIDWORKS Premium 2016 x64 版</span>
        <span className="w-[101px] shrink-0 tracking-[0.15px]">-6.25mm</span>
        <span className="w-[79px] shrink-0">3.17mm</span>
        <span className="w-[37px] shrink-0 text-[14.700px] tracking-[-0.2px]">0mm</span>
        <span className="ml-[2px] w-[51px] shrink-0 whitespace-nowrap text-[14.900px]">欠定义</span>
        <div className="h-[19px] w-[9px] border-x border-[#ccc]" />
        <div className="ml-[7px] h-[19px] w-[17px] border-x border-[#ccc]" />
        <span className="ml-[36px] w-[67px] shrink-0 whitespace-nowrap text-[14.900px]">自定义</span>
        <Svg w={6} h={4}><path d="M0 3.500H6L3 .500Z" fill="#333" /></Svg>
        <Svg w={18} h={17} className="ml-[65px]"><path d="M2 3 6 .700 16.500 6 13 14.500 3 11Z" fill="#ddd" stroke="#444" strokeWidth="1.200" /><path d="M3.500 9 12 12.500 15 7M7 3.500Q4 4 6 7T10 6M10 9 11.500 5.500 14 6.500" stroke="#444" strokeWidth="1.100" /></Svg>
      </div>
    </>
  );
}

export default function App() {
  return (
    <div className="flex h-[1030px] w-[1920px] flex-col overflow-hidden bg-[#eaf1ff] font-['Open_Sans','Noto_Sans_CJK_SC',sans-serif]">
      <TitleBar />
      <Ribbon />
      <TabRow />
      <div className="relative flex h-[840px] shrink-0">
        <FeaturePanel />
        <div className="border-r border-[#b8b8b8]"><Canvas /></div>
        <div className="absolute left-[254px] top-[381px] flex h-[49px] w-[13px] items-center justify-center border border-l-0 border-[#868686] bg-[#f7f7f7]">
          <div className="h-[6px] w-[6px] rounded-full border border-[#8a8a8a] bg-[#ccc]" />
        </div>
        <div className="absolute left-[1119px] top-[685px] flex h-[25px] w-[67px] items-center justify-center border border-[#767676] bg-white pb-px pr-px text-[15px] leading-[20px] tracking-[-0.3px] text-[#575757] shadow-[4px_4px_3px_rgba(0,0,0,0.45)]">分割线3</div>
        <TaskPane />
      </div>
      <Bottom />
    </div>
  );
}
